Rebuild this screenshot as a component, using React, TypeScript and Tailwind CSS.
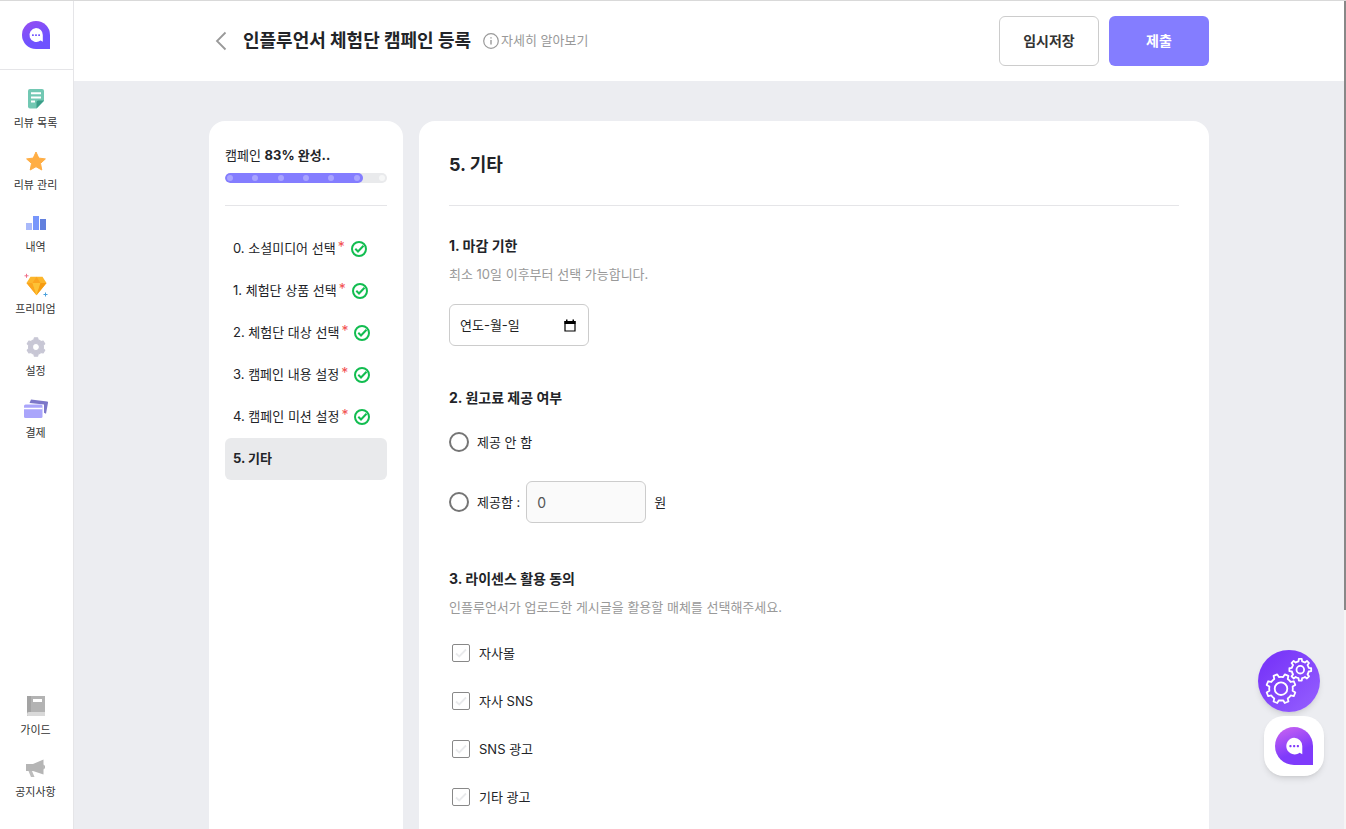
import { useState } from "react";
import type { ReactNode } from "react";

const gearPath = (cx: number, cy: number, outer: number, inner: number, teeth: number) => {
  const step = (Math.PI * 2) / teeth;
  const point = (r: number, a: number) =>
    `${(cx + r * Math.cos(a)).toFixed(2)} ${(cy + r * Math.sin(a)).toFixed(2)}`;
  let d = "";
  for (let i = 0; i < teeth; i++) {
    const a = i * step - Math.PI / 2;
    d += `${i === 0 ? "M" : "L"}${point(inner, a - step * 0.27)}`;
    d += `L${point(outer, a - step * 0.17)}`;
    d += `L${point(outer, a + step * 0.17)}`;
    d += `L${point(inner, a + step * 0.27)}`;
    d += `A${inner} ${inner} 0 0 1 ${point(inner, a + step * 0.73)}`;
  }
  return d + "Z";
};

type LogoProps = { id: string; from: string; to: string; bubble?: string; className: string };

const Logo = ({ id, from, to, bubble, className }: LogoProps) => (
  <svg viewBox="0 0 28 28" className={className} aria-hidden="true">
    <defs>
      <linearGradient id={id} x1="0.2" y1="0" x2="0.6" y2="1">
        <stop offset="0" stopColor={from} />
        <stop offset="0.7" stopColor={to} />
      </linearGradient>
    </defs>
    <path d="M14 0a14 14 0 0 1 14 14v14H14a14 14 0 0 1 0-28z" fill={`url(#${id})`} />
    <g transform={bubble}>
      <path d="M14 7a7 7 0 0 1 6.800 7v6.800l-2.200-1.200A7 7 0 1 1 14 7z" fill="#fff" />
      <g fill={to}>
        <rect x="10" y="13.200" width="1.800" height="1.800" rx=".5" />
        <rect x="13.100" y="13.200" width="1.800" height="1.800" rx=".5" />
        <rect x="16.200" y="13.200" width="1.800" height="1.800" rx=".5" />
      </g>
    </g>
  </svg>
);

const ReviewListIcon = () => (
  <svg viewBox="0 0 24 24" className="size-6">
    <path d="M6 2h12a2 2 0 0 1 2 2v10l-7.500 7.500H6a2 2 0 0 1-2-2V4a2 2 0 0 1 2-2z" fill="#72c8b3" />
    <path d="M20 13.500h-5.500a2 2 0 0 0-2 2v6z" fill="#3a9d88" />
    <path d="M7 6.200h10M7 10.400h10M7 14.600h4" stroke="#fff" strokeWidth="2" />
  </svg>
);

const StarIcon = () => (
  <svg viewBox="0 0 24 24" className="size-6">
    <path
      d="M12 3l2.800 6.100 6.600.8-4.900 4.500 1.300 6.600L12 17.700 6.200 21l1.300-6.600-4.900-4.500 6.600-.8z"
      fill="#ffae45"
      stroke="#ffae45"
      strokeLinejoin="round"
    />
  </svg>
);

const ChartIcon = () => (
  <svg viewBox="0 0 24 24" className="size-6">
    <rect x="2" y="12" width="6" height="7" fill="#a9b9fa" />
    <rect x="9" y="5" width="6" height="14" fill="#7796fb" />
    <rect x="16" y="8" width="6" height="11" fill="#6280de" />
  </svg>
);

const PremiumIcon = () => (
  <svg viewBox="0 0 24 24" className="size-6">
    <path d="M6.500 3.800h12l4 6.200-10 12.200L2.500 10z" fill="#fcb62c" />
    <path d="M2.500 10h6l4 12.200zM8.500 10l4-6.200 4 6.200z" fill="#fba51f" />
    <path d="M8.500 10h8l-4 12.200z" fill="#fdc236" />
    <path d="M16.500 10h6l-10 12.200z" fill="#f69c12" />
    <path d="M2.500.8v4M.5 2.800h4" stroke="#f0718a" />
    <path d="M21.500 19.500v4M19.500 21.500h4" stroke="#4aa0dc" />
  </svg>
);

const SettingsIcon = () => (
  <svg viewBox="0 0 24 24" className="size-6">
    <path
      d={gearPath(12, 12, 9.3, 7.4, 6) + "M15.500 12a3.500 3.500 0 1 0-7 0a3.500 3.500 0 1 0 7 0Z"}
      fill="#c8c7d5"
      fillRule="evenodd"
      stroke="#c8c7d5"
      strokeWidth="1.200"
      strokeLinejoin="round"
    />
  </svg>
);

const CardsIcon = () => (
  <svg viewBox="0 0 24 24" className="size-6">
    <path d="M7 2.500l16.200 2a1 1 0 0 1 .8 1.200l-2 11-2-1V7.500L5.500 6z" fill="#7c77c9" />
    <rect x="0" y="7.500" width="18.500" height="13.500" rx="1.500" fill="#aaa5fb" />
    <path d="M0 11.500h18.500" stroke="#fff" strokeWidth="1.500" />
  </svg>
);

const GuideIcon = () => (
  <svg viewBox="0 0 24 24" className="size-6">
    <path d="M3 2h18v20H3z" fill="#b3b3b3" />
    <path d="M3 2h4v16H5a2 2 0 0 0-2 2z" fill="#a3a3a3" />
    <path d="M5 18h16v4H4.500a1.500 1.500 0 0 1-1.500-2 2 2 0 0 1 2-2z" fill="#d9d9d9" />
    <path d="M9 5h9v3H9z" fill="#fff" />
  </svg>
);

const NoticeIcon = () => (
  <svg viewBox="0 0 24 24" className="size-6">
    <path d="M2 8h7l10.500-4.500v15L9 15H2z" fill="#b5b5b5" />
    <path d="M4.500 15H8l2.500 6H7z" fill="#bdbdbd" />
    <path d="M19.500 8.500a3 3 0 0 1 0 5z" fill="#999" />
  </svg>
);

const DoneIcon = () => (
  <svg viewBox="0 0 16 16" className="size-4" fill="none" stroke="#12bd50" strokeWidth="2" role="img" aria-label="완료">
    <circle cx="8" cy="8" r="7" />
    <path d="M4.300 7.800l2.700 2.700 5.500-5.700" />
  </svg>
);

const topMenu = [
  { label: "리뷰 목록", icon: <ReviewListIcon /> },
  { label: "리뷰 관리", icon: <StarIcon /> },
  { label: "내역", icon: <ChartIcon /> },
  { label: "프리미엄", icon: <PremiumIcon /> },
  { label: "설정", icon: <SettingsIcon /> },
  { label: "결제", icon: <CardsIcon /> },
];

const bottomMenu = [
  { label: "가이드", icon: <GuideIcon /> },
  { label: "공지사항", icon: <NoticeIcon /> },
];

const steps = [
  "0. 소셜미디어 선택",
  "1. 체험단 상품 선택",
  "2. 체험단 대상 선택",
  "3. 캠페인 내용 설정",
  "4. 캠페인 미션 설정",
];

const mediaOptions = ["자사몰", "자사 SNS", "SNS 광고", "기타 광고"];

const MenuItem = ({ label, icon }: { label: string; icon: ReactNode }) => (
  <a href="#" className="flex flex-col items-center gap-1">
    {icon}
    <span className="text-[11px] leading-4 text-[#333]">{label}</span>
  </a>
);

const Sidebar = () => (
  <aside className="flex w-[74px] shrink-0 flex-col border-r border-[#e5e5e8] bg-white">
    <a href="#" aria-label="홈" className="flex h-[69px] items-center justify-center border-b border-[#e5e5e8] pr-px">
      <Logo id="side-logo" from="#944df2" to="#6f52ff" className="size-7" />
    </a>
    <nav className="mt-[17px] flex flex-col gap-[18px] pr-0.5">
      {topMenu.map((item) => (
        <MenuItem key={item.label} {...item} />
      ))}
    </nav>
    <nav className="mt-auto mb-[29px] flex flex-col gap-[18px] pr-0.5">
      {bottomMenu.map((item) => (
        <MenuItem key={item.label} {...item} />
      ))}
    </nav>
  </aside>
);

const Header = () => (
  <header className="h-20 shrink-0 bg-white">
    <div className="mx-auto flex h-full max-w-[1000px] items-center">
      <button aria-label="뒤로" className="flex h-8 w-6 items-center justify-center">
        <svg viewBox="0 0 12 20" className="h-5 w-3" fill="none" stroke="#999" strokeWidth="1.800">
          <path d="M10.500 1.500L2 10l8.500 8.500" />
        </svg>
      </button>
      <h1 className="ml-2.5 text-lg font-bold text-[#222428]">인플루언서 체험단 캠페인 등록</h1>
      <a href="#" className="ml-3 flex items-center gap-0.5 text-[13px] text-[#999]">
        <svg viewBox="0 0 16 16" className="size-4" fill="none" stroke="#999">
          <circle cx="8" cy="8" r="7.300" strokeWidth="1.200" />
          <path d="M8 7v4.500M8 4.200v1.300" strokeWidth="1.400" />
        </svg>
        자세히 알아보기
      </a>
      <div className="ml-auto flex gap-2.5">
        <button className="h-[50px] w-[100px] rounded-md border border-[#ccc] bg-white text-sm font-bold text-[#333]">
          임시저장
        </button>
        <button className="h-[50px] w-[100px] rounded-md bg-[#847dff] text-sm font-bold text-white">제출</button>
      </div>
    </div>
  </header>
);

const Steps = () => (
  <section className="w-[194px] shrink-0 rounded-t-2xl bg-white px-4 pt-6">
    <p className="text-[13px] leading-5">
      캠페인 <b>83% 완성..</b>
    </p>
    <div className="relative mt-2 h-2.5 overflow-hidden rounded-full bg-[#e9eaec]">
      <div className="h-full w-[85%] rounded-full bg-[#847dff]" />
      <div className="absolute inset-0 flex items-center justify-between px-0.5">
        {[0, 1, 2, 3, 4, 5, 6].map((dot) => (
          <span key={dot} className={dot < 6 ? "size-1.5 rounded-full bg-white/30" : "size-1.5 rounded-full bg-white/60"} />
        ))}
      </div>
    </div>
    <ol className="mt-[22px] border-t border-[#e5e5e8] pt-[22px] text-[13px]">
      {steps.map((step) => (
        <li key={step}>
          <a href="#" className="flex h-[42px] items-center px-2">
            {step}
            <span className="mb-1 ml-0.5 text-sm leading-4 text-[#f25050]">*</span>
            <span className="ml-1.5">
              <DoneIcon />
            </span>
          </a>
        </li>
      ))}
      <li>
        <a href="#" aria-current="step" className="flex h-[42px] items-center rounded-md bg-[#e9eaec] px-2 font-bold">
          5. 기타
        </a>
      </li>
    </ol>
  </section>
);

const Radio = ({ id, checked, onChange }: { id: string; checked: boolean; onChange: () => void }) => (
  <input
    type="radio"
    name="fee"
    id={id}
    checked={checked}
    onChange={onChange}
    className="mr-2 size-5 appearance-none rounded-full border-2 border-[#757575] checked:border-6 checked:border-[#847dff]"
  />
);

const EtcForm = () => {
  const [deadline, setDeadline] = useState("");
  const [fee, setFee] = useState("");
  const [amount, setAmount] = useState("0");

  return (
    <form className="min-w-0 flex-1 rounded-t-2xl bg-white px-[30px] pt-[30px] text-[13px] leading-5">
      <h2 className="border-b border-[#e5e5e8] pb-[26px] text-lg leading-7 font-bold">5. 기타</h2>

      <section className="mt-[30px]">
        <h3 className="text-sm leading-5 font-bold">
          <label htmlFor="deadline">1. 마감 기한</label>
        </h3>
        <p className="mt-2 text-[#999]">최소 10일 이후부터 선택 가능합니다.</p>
        <div className="mt-5 flex h-[42px] w-[140px] items-center rounded-md border border-[#ccc] pr-3 pl-2.5">
          <input
            id="deadline"
            value={deadline}
            onChange={(e) => setDeadline(e.target.value)}
            placeholder="연도-월-일"
            className="w-full min-w-0 text-[13px] outline-none placeholder:text-[#222]"
          />
          <button type="button" aria-label="날짜 선택">
            <svg viewBox="0 0 12 13" className="h-[13px] w-3">
              <path d="M1 2.500h10v9.500H1z" fill="none" stroke="#000" strokeWidth="1.200" />
              <path d="M.5 2h11v3H.5zM2 .5h1.500V2H2zM8.500.5H10V2H8.500z" />
            </svg>
          </button>
        </div>
      </section>

      <section className="mt-[42px]">
        <h3 className="text-sm leading-5 font-bold">2. 원고료 제공 여부</h3>
        <div className="mt-[13px] flex h-[42px] items-center">
          <Radio id="fee-none" checked={fee === "none"} onChange={() => setFee("none")} />
          <label htmlFor="fee-none">제공 안 함</label>
        </div>
        <div className="mt-[18px] flex h-[42px] items-center">
          <Radio id="fee-paid" checked={fee === "paid"} onChange={() => setFee("paid")} />
          <label htmlFor="fee-paid">제공함 :</label>
          <input
            aria-label="원고료"
            value={amount}
            onChange={(e) => setAmount(e.target.value)}
            disabled={fee !== "paid"}
            className="mr-2 ml-1.5 h-full w-[120px] rounded-md border border-[#ccc] bg-[#fafafa] px-2.5 text-sm text-[#555]"
          />
          원
        </div>
      </section>

      <section className="mt-[46px]">
        <h3 className="text-sm leading-5 font-bold">3. 라이센스 활용 동의</h3>
        <p className="mt-2 text-[#999]">인플루언서가 업로드한 게시글을 활용할 매체를 선택해주세요.</p>
        <div className="mt-3">
          {mediaOptions.map((option) => (
            <label key={option} className="flex h-12 items-center gap-[9px] pl-[3px]">
              <span className="relative flex">
                <input
                  type="checkbox"
                  className="peer size-[18px] appearance-none rounded-xs border border-[#888] bg-white checked:border-[#847dff] checked:bg-[#847dff]"
                />
                <svg
                  viewBox="0 0 18 18"
                  className="pointer-events-none absolute inset-0 size-[18px] text-[#e9eaec] peer-checked:text-white"
                  fill="none"
                  stroke="currentColor"
                  strokeWidth="1.800"
                >
                  <path d="M4 9.500l3.200 3L14 5.500" />
                </svg>
              </span>
              {option}
            </label>
          ))}
        </div>
      </section>
    </form>
  );
};

const FloatingButtons = () => (
  <div className="fixed right-[22px] bottom-[53px] flex flex-col gap-1">
    <button aria-label="설정 도구" className="size-[62px] rounded-full shadow-md">
      <svg viewBox="0 0 62 62" className="size-full">
        <defs>
          <linearGradient id="fab" x1="0" y1="0" x2="1" y2="1">
            <stop offset="0.200" stopColor="#7a38f9" />
            <stop offset="1" stopColor="#9661ff" />
          </linearGradient>
        </defs>
        <circle cx="31" cy="31" r="31" fill="url(#fab)" />
        <g fill="none" stroke="#fff" strokeWidth="1.800" strokeLinejoin="round">
          <path d={gearPath(23, 38.7, 14.8, 11.8, 8)} transform="rotate(22.500 23 38.700)" />
          <circle cx="23" cy="38.700" r="6.300" />
          <path d={gearPath(42.3, 19.7, 11, 8.6, 8)} />
          <circle cx="42.300" cy="19.700" r="3.800" />
        </g>
      </svg>
    </button>
    <button
      aria-label="채팅 상담"
      className="ml-1.5 flex size-[60px] items-center justify-center rounded-[20px] bg-white shadow-md"
    >
      <Logo
        id="chat-logo"
        from="#c661f2"
        to="#7f3bfb"
        bubble="translate(1.800 1.700) scale(.88)"
        className="size-[38px]"
      />
    </button>
  </div>
);

export default function App() {
  return (
    <div
      lang="ko"
      className="flex h-screen overflow-hidden border-t border-[#d9d9d9] bg-[#ecedf1] font-['Inter','Noto_Sans_CJK_KR',sans-serif] text-[#222428]"
    >
      <Sidebar />
      <div className="flex min-w-0 flex-1 flex-col overflow-hidden">
        <Header />
        <main className="min-h-0 flex-1 overflow-y-auto [scrollbar-width:none]">
          <div className="mx-auto flex min-h-full max-w-[1000px] gap-4 pt-10">
            <Steps />
            <EtcForm />
          </div>
        </main>
      </div>
      <div className="w-0.5 shrink-0 bg-[#f5f5f5]">
        <div className="h-[73.5%] bg-[#888]" />
      </div>
      <FloatingButtons />
    </div>
  );
}
